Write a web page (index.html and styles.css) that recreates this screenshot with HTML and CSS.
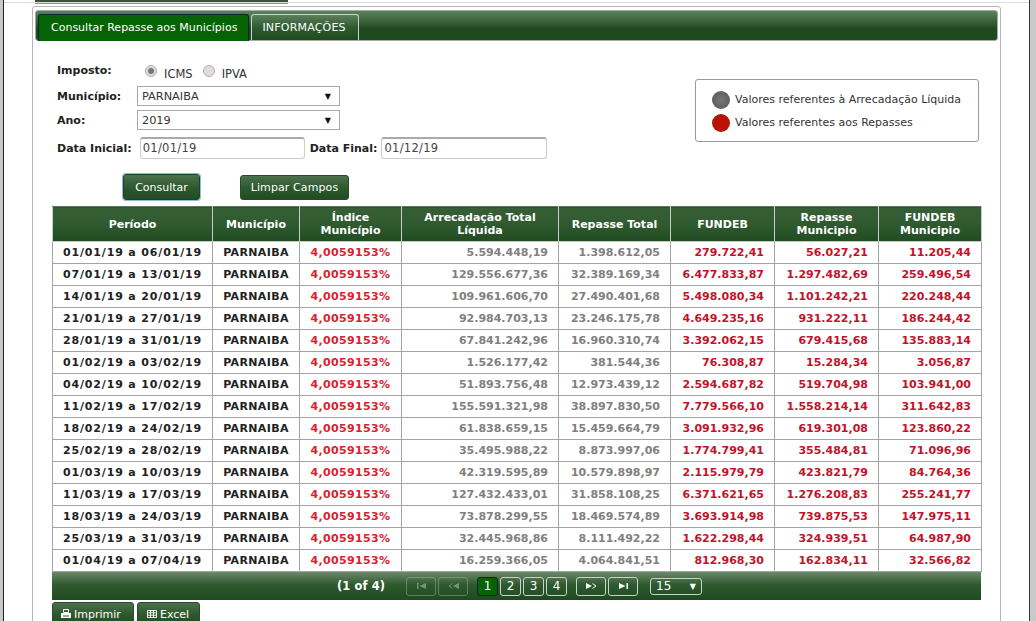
FILE: index.html
```html
<!DOCTYPE html>
<html lang="pt">
<head>
<meta charset="utf-8">
<title>Consultar Repasse aos Municípios</title>
<link rel="stylesheet" href="styles.css">
</head>
<body>
<div class="frame">
  <div class="topbar"></div>
  <main class="panel">
    <nav class="tabs">
      <a class="tab active">Consultar Repasse aos Municípios</a>
      <a class="tab info">INFORMAÇÕES</a>
    </nav>
    <section class="filters">
      <form class="form">
        <div class="line radio-line">
          <label class="lbl lbl-imposto">Imposto:</label>
          <span class="radio checked"></span><span class="radio-text">ICMS</span>
          <span class="radio"></span><span class="radio-text">IPVA</span>
        </div>
        <div class="line select-line">
          <label class="lbl lbl-wide">Município:</label>
          <div class="select"><span>PARNAIBA</span><i>▼</i></div>
        </div>
        <div class="line select-line second">
          <label class="lbl lbl-wide">Ano:</label>
          <div class="select"><span>2019</span><i>▼</i></div>
        </div>
        <div class="line date-line">
          <label class="lbl">Data Inicial:</label>
          <div class="input input-a">01/01/19</div>
          <label class="lbl">Data Final:</label>
          <div class="input input-b">01/12/19</div>
        </div>
        <div class="actions">
          <button type="button" class="btn focus">Consultar</button>
          <button type="button" class="btn clear">Limpar Campos</button>
        </div>
      </form>
      <aside class="legend">
        <div class="legend-row"><span class="dot grey"></span>Valores referentes à Arrecadação Líquida</div>
        <div class="legend-row"><span class="dot red"></span>Valores referentes aos Repasses</div>
      </aside>
    </section>
    <table class="grid">
      <colgroup>
        <col class="c1"><col class="c2"><col class="c3"><col class="c4"><col class="c5"><col class="c6"><col class="c7"><col class="c8">
      </colgroup>
      <thead>
        <tr><th>Período</th><th>Município</th><th>Índice<br>Município</th><th>Arrecadação Total<br>Líquida</th><th>Repasse Total</th><th>FUNDEB</th><th>Repasse<br>Municipio</th><th>FUNDEB<br>Municipio</th></tr>
      </thead>
      <tbody>
        <tr><td class="k">01/01/19 a 06/01/19</td><td class="k">PARNAIBA</td><td class="i">4,0059153%</td><td class="g">5.594.448,19</td><td class="g">1.398.612,05</td><td class="r">279.722,41</td><td class="r">56.027,21</td><td class="r">11.205,44</td></tr>
        <tr><td class="k">07/01/19 a 13/01/19</td><td class="k">PARNAIBA</td><td class="i">4,0059153%</td><td class="g">129.556.677,36</td><td class="g">32.389.169,34</td><td class="r">6.477.833,87</td><td class="r">1.297.482,69</td><td class="r">259.496,54</td></tr>
        <tr><td class="k">14/01/19 a 20/01/19</td><td class="k">PARNAIBA</td><td class="i">4,0059153%</td><td class="g">109.961.606,70</td><td class="g">27.490.401,68</td><td class="r">5.498.080,34</td><td class="r">1.101.242,21</td><td class="r">220.248,44</td></tr>
        <tr><td class="k">21/01/19 a 27/01/19</td><td class="k">PARNAIBA</td><td class="i">4,0059153%</td><td class="g">92.984.703,13</td><td class="g">23.246.175,78</td><td class="r">4.649.235,16</td><td class="r">931.222,11</td><td class="r">186.244,42</td></tr>
        <tr><td class="k">28/01/19 a 31/01/19</td><td class="k">PARNAIBA</td><td class="i">4,0059153%</td><td class="g">67.841.242,96</td><td class="g">16.960.310,74</td><td class="r">3.392.062,15</td><td class="r">679.415,68</td><td class="r">135.883,14</td></tr>
        <tr><td class="k">01/02/19 a 03/02/19</td><td class="k">PARNAIBA</td><td class="i">4,0059153%</td><td class="g">1.526.177,42</td><td class="g">381.544,36</td><td class="r">76.308,87</td><td class="r">15.284,34</td><td class="r">3.056,87</td></tr>
        <tr><td class="k">04/02/19 a 10/02/19</td><td class="k">PARNAIBA</td><td class="i">4,0059153%</td><td class="g">51.893.756,48</td><td class="g">12.973.439,12</td><td class="r">2.594.687,82</td><td class="r">519.704,98</td><td class="r">103.941,00</td></tr>
        <tr><td class="k">11/02/19 a 17/02/19</td><td class="k">PARNAIBA</td><td class="i">4,0059153%</td><td class="g">155.591.321,98</td><td class="g">38.897.830,50</td><td class="r">7.779.566,10</td><td class="r">1.558.214,14</td><td class="r">311.642,83</td></tr>
        <tr><td class="k">18/02/19 a 24/02/19</td><td class="k">PARNAIBA</td><td class="i">4,0059153%</td><td class="g">61.838.659,15</td><td class="g">15.459.664,79</td><td class="r">3.091.932,96</td><td class="r">619.301,08</td><td class="r">123.860,22</td></tr>
        <tr><td class="k">25/02/19 a 28/02/19</td><td class="k">PARNAIBA</td><td class="i">4,0059153%</td><td class="g">35.495.988,22</td><td class="g">8.873.997,06</td><td class="r">1.774.799,41</td><td class="r">355.484,81</td><td class="r">71.096,96</td></tr>
        <tr><td class="k">01/03/19 a 10/03/19</td><td class="k">PARNAIBA</td><td class="i">4,0059153%</td><td class="g">42.319.595,89</td><td class="g">10.579.898,97</td><td class="r">2.115.979,79</td><td class="r">423.821,79</td><td class="r">84.764,36</td></tr>
        <tr><td class="k">11/03/19 a 17/03/19</td><td class="k">PARNAIBA</td><td class="i">4,0059153%</td><td class="g">127.432.433,01</td><td class="g">31.858.108,25</td><td class="r">6.371.621,65</td><td class="r">1.276.208,83</td><td class="r">255.241,77</td></tr>
        <tr><td class="k">18/03/19 a 24/03/19</td><td class="k">PARNAIBA</td><td class="i">4,0059153%</td><td class="g">73.878.299,55</td><td class="g">18.469.574,89</td><td class="r">3.693.914,98</td><td class="r">739.875,53</td><td class="r">147.975,11</td></tr>
        <tr><td class="k">25/03/19 a 31/03/19</td><td class="k">PARNAIBA</td><td class="i">4,0059153%</td><td class="g">32.445.968,86</td><td class="g">8.111.492,22</td><td class="r">1.622.298,44</td><td class="r">324.939,51</td><td class="r">64.987,90</td></tr>
        <tr><td class="k">01/04/19 a 07/04/19</td><td class="k">PARNAIBA</td><td class="i">4,0059153%</td><td class="g">16.259.366,05</td><td class="g">4.064.841,51</td><td class="r">812.968,30</td><td class="r">162.834,11</td><td class="r">32.566,82</td></tr>
      </tbody>
    </table>
    <div class="pager">
      <span class="count">(1 of 4)</span>
      <span class="pg off nav">
        <svg viewBox="0 0 9 6" width="9" height="6"><path d="M0 0h1.500v6H0zM2.500 3L9 0v6z" fill="currentColor"/></svg>
      </span>
      <span class="pg off nav">
        <svg viewBox="0 0 11 6" width="11" height="6"><path d="M4.500 .6L1 3l3.500 2.400" fill="none" stroke="currentColor"/><path d="M5 3l6-3v6z" fill="currentColor"/></svg>
      </span>
      <span class="pages">
        <span class="pg num on">1</span><span class="pg num">2</span><span class="pg num">3</span><span class="pg num">4</span>
      </span>
      <span class="pg nav next">
        <svg viewBox="0 0 11 6" width="11" height="6"><path d="M0 0l6 3-6 3z" fill="currentColor"/><path d="M6.500 .6L10 3 6.500 5.400" fill="none" stroke="currentColor"/></svg>
      </span>
      <span class="pg nav">
        <svg viewBox="0 0 9 6" width="9" height="6"><path d="M0 0l6.500 3L0 6zM7.500 0H9v6H7.500z" fill="currentColor"/></svg>
      </span>
      <span class="pg size"><span>15</span><i>▼</i></span>
    </div>
    <div class="exports">
      <button type="button" class="btn exp print">
        <svg viewBox="0 0 10 10" width="10" height="10"><path d="M2.500 .5h5v3h-5z" fill="none" stroke="currentColor"/><path d="M0 4h10v5H0z" fill="currentColor"/><path d="M2 7h6" stroke="#2f5a2f"/></svg>Imprimir
      </button>
      <button type="button" class="btn exp excel">
        <svg viewBox="0 0 10 10" width="10" height="10"><path d="M.5 1.500h9v7h-9zM.5 3.800h9M.5 6.200h9M3.500 1.500v7M6.500 1.500v7" fill="none" stroke="currentColor" stroke-width=".9"/></svg>Excel
      </button>
    </div>
  </main>
</div>
</body>
</html>
```
FILE: styles.css
```css
* { box-sizing: border-box; }
html, body { margin: 0; height: 621px; overflow: hidden; background: #c9c9c9; }
body { font-family: "DejaVu Sans", Verdana, sans-serif; font-size: 11px; color: #222; padding: 0 6px 0 3px; }
.frame { height: 621px; background: #fff; border-left: 1px solid #222; border-right: 1px solid #333; padding: 0 28px; overflow: hidden; }
.topbar { width: 253px; height: 4px; margin-left: 3px; background: #3d4f3d; border-bottom: 1px solid #8a948a; position: relative; z-index: 1; }
.topbar::after { content: ""; position: absolute; left: -35px; right: -780px; top: 2px; height: 1px; background: #ddd; z-index: -1; }
.panel { height: 640px; margin-top: 2px; background: #fff; border: 1px solid #b5b5b5; border-radius: 3px 3px 0 0; padding: 3px 2px 2px; }
.tabs { display: flex; gap: 2px; height: 31px; padding: 3px 0 0 2px; border-radius: 3px; align-items: flex-end; border: 1px solid #9fae9f; background: linear-gradient(#5d7f5d, #2f5a2f 45%, #20491f 60%, #1f4a1f); }
.tab { display: flex; align-items: center; height: 26px; color: #fff; font-size: 11px; border: 1px solid #c9d3c9; border-bottom: 0; border-radius: 3px 3px 0 0; background: linear-gradient(#5d7f5d, #2f5a2f 50%, #1f4a1f); }
.tab.info { padding: 0 12px 0 10px; letter-spacing: .2px; }
.tab.active { padding: 0 11px 1px 12px; margin-bottom: -1px; height: 27px; background: #056305; border-color: #123; }
.filters { display: flex; justify-content: space-between; padding: 0 19px 0 22px; }
.form { width: 500px; padding-top: 19px; }
.lbl { font-weight: bold; color: #222; font-size: 11px; }
.line { display: flex; align-items: center; }
.radio-line { height: 23px; }
.lbl-imposto { width: 88px; margin-bottom: 2px; }
.radio { width: 12px; height: 12px; border-radius: 50%; background: #ddd; border: 1px solid #b0b0b0; margin-bottom: 2px; position: relative; }
.radio.checked::after { content: ""; position: absolute; left: 2px; top: 2px; width: 6px; height: 6px; border-radius: 50%; background: #777; }
.radio-text { margin: 4px 10px 0 7px; font-size: 11.5px; color: #333; }
.select-line { height: 20px; margin-top: 3px; }
.second { margin-top: 4px; }
.lbl-wide { width: 80px; }
.select { width: 203px; height: 20px; display: flex; justify-content: space-between; align-items: center; padding: 0 5px 0 4px; border: 1px solid #a9a9a9; font-size: 11.3px; color: #333; background: #fff; }
.select i { font-style: normal; font-size: 8px; color: #111; margin-right: 3px; }
.date-line { margin-top: 7px; height: 22px; }
.input { width: 165px; height: 22px; border: 1px solid #ccc; border-top: 2px solid #aaa; border-radius: 3px; padding: 0 2px; line-height: 18px; color: #444; font-size: 11.5px; letter-spacing: .3px; }
.input-a { margin: 0 5px 0 8px; }
.input-b { margin-left: 4px; width: 166px; }
.actions { display: flex; align-items: center; gap: 40px; margin: 15px 0 0 66px; }
.btn { font-family: inherit; font-size: 11px; color: #fff; height: 25px; border: 1px solid #2a4a2a; border-radius: 3px; background: linear-gradient(#4c704c, #2f5a2f 50%, #214c21); padding: 0 10px; }
.btn.clear { letter-spacing: .1px; width: 109px; padding: 0; }
.btn.focus { width: 77px; height: 26px; padding: 0; border: 1px solid #1f3f2f; box-shadow: 0 0 0 1px #8fbbdd; }
.legend { width: 284px; height: 63px; margin-top: 38px; border: 1px solid #9a9a9a; border-radius: 3px; padding: 8px 0 0 16px; font-size: 11px; color: #333; }
.legend-row { display: flex; align-items: center; gap: 5px; height: 23px; }
.dot { width: 18px; height: 18px; border-radius: 50%; }
.dot.grey { background: radial-gradient(#777, #555); }
.dot.red { background: radial-gradient(#c40c00, #a51c0c); }
.grid { width: 929px; margin: 6px 0 0 17px; border-collapse: collapse; table-layout: fixed; }
.c1 { width: 160px; } .c2 { width: 87px; } .c3 { width: 102px; } .c4 { width: 157px; } .c5 { width: 112px; } .c6 { width: 104px; } .c7 { width: 104px; } .c8 { width: 103px; }
th { height: 35px; padding: 0 4px; color: #fff; font-size: 11px; line-height: 13px; border: 1px solid #c5d0c5; border-top-color: #5d7a5d; background: linear-gradient(#375f37, #2f5a2f 50%, #214c21); font-weight: bold; }
td { height: 22px; padding: 0 10px 0 3px; border: 1px solid #a3a3a3; text-align: right; font-weight: bold; font-size: 11px; background: #fff; white-space: nowrap; }
td.k { text-align: center; color: #222; padding: 0 2px; letter-spacing: .84px; }
td.k:nth-child(2) { letter-spacing: .35px; }
td.i { text-align: center; color: #d8232e; padding: 0 2px; letter-spacing: .35px; }
td.g { color: #808080; }
td.r { color: #c4122a; }
.pager { width: 929px; height: 28px; margin-left: 17px; display: flex; align-items: center; color: #fff; background: linear-gradient(#6b886b, #2f5a2f 45%, #1f4a1f); }
.count { font-weight: bold; margin-left: 285px; width: 69px; font-size: 11.5px; letter-spacing: .1px; }
.pg { display: flex; align-items: center; justify-content: center; height: 19px; border: 1px solid #c9d3c9; border-radius: 3px; color: #fff; }
.nav { width: 30px; margin-right: 2px; }
.off { opacity: .35; }
.pages { display: flex; gap: 2px; margin: 0 9px 0 7px; }
.num { width: 21px; font-size: 12px; }
.on { background: #056305; border-color: #123; }
.size { margin-left: 10px; width: 52px; justify-content: space-between; padding: 0 5px; font-size: 12px; height: 17px; }
.size i { font-style: normal; font-size: 8px; }
.exports { display: flex; gap: 3px; margin: 2px 0 0 17px; }
.exp { height: 24px; padding: 0 0 0 8px; display: flex; align-items: center; gap: 3px; }
.print { width: 82px; }
.excel { width: 63px; padding-left: 9px; }
```
